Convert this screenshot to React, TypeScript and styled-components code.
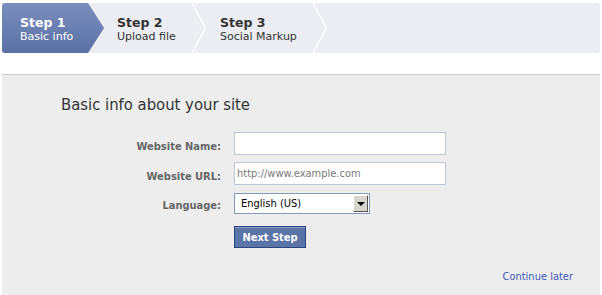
import styled, { createGlobalStyle } from 'styled-components';

const steps = [
  { title: 'Step 1', sub: 'Basic info', width: 102 },
  { title: 'Step 2', sub: 'Upload file', width: 103 },
  { title: 'Step 3', sub: 'Social Markup', width: 121 },
];

const GlobalStyle = createGlobalStyle`
  body {
    margin: 0;
    background: #fff;
    font-family: "DejaVu Sans Condensed", "DejaVu Sans", sans-serif;
    font-stretch: condensed;
  }
`;

const Chevron = () => (
  <ChevronSvg width="16" height="50" viewBox="0 0 16 50">
    <path d="M1 0 L14.5 25 L1 50" fill="none" stroke="#fff" strokeWidth="1.3" />
  </ChevronSvg>
);

const App = () => {
  return (
    <Page>
      <GlobalStyle />
      <StepBar>
        {steps.map((s, i) => (
          <Step key={s.title} $active={i === 0} $w={s.width}>
            <StepText $active={i === 0}>
              <StepTitle>{s.title}</StepTitle>
              <StepSub>{s.sub}</StepSub>
            </StepText>
            {i > 0 && <Chevron />}
          </Step>
        ))}
      </StepBar>

      <Panel>
        <Heading>Basic info about your site</Heading>
        <Form>
          <Label>Website Name:</Label>
          <TextInput type="text" />
          <Label>Website URL:</Label>
          <TextInput type="text" placeholder="http://www.example.com" />
          <Label>Language:</Label>
          <SelectBox>
            <SelectValue>English (US)</SelectValue>
            <ArrowButton>
              <Triangle />
            </ArrowButton>
          </SelectBox>
          <span />
          <div>
            <NextButton>Next Step</NextButton>
          </div>
        </Form>
        <Footer>
          <ContinueLink href="#">Continue later</ContinueLink>
        </Footer>
      </Panel>
    </Page>
  );
};

const Page = styled.div`
  padding: 3px 2px 0 2px;
`;

const StepBar = styled.div`
  display: flex;
  height: 50px;
  background-color: #ebedf2;
  border-radius: 3px;
`;

const Step = styled.div<{ $active: boolean; $w: number }>`
  display: flex;
  width: ${(p) => p.$w}px;
  height: 50px;
  padding-left: ${(p) => (p.$active ? 18 : 13)}px;
  box-sizing: border-box;
  ${(p) =>
    p.$active &&
    `
    background: linear-gradient(#7a8ebd, #5a71a6);
    border-radius: 3px 0 0 3px;
    clip-path: polygon(0 0, 86px 0, 102px 50%, 86px 100%, 0 100%);
  `}
`;

const ChevronSvg = styled.svg`
  flex-shrink: 0;
  display: block;
`;

const StepText = styled.div<{ $active: boolean }>`
  flex: 1;
  padding-top: 13px;
  font-family: "DejaVu Sans", sans-serif;
  font-stretch: normal;
  color: ${(p) => (p.$active ? '#fff' : '#333')};
`;

const StepTitle = styled.div`
  font-size: 12.5px;
  font-weight: 700;
  line-height: 14px;
`;

const StepSub = styled.div`
  font-size: 11px;
  line-height: 14px;
`;

const Panel = styled.div`
  margin-top: 21px;
  border-top: 1px solid #cccccc;
  background-color: #ededed;
  padding: 20px 27px 12px 59px;
`;

const Heading = styled.h2`
  margin: 0 0 18px 0;
  font-size: 16.5px;
  font-weight: 400;
  color: #333;
`;

const Form = styled.div`
  display: grid;
  grid-template-columns: 160px 212px;
  column-gap: 13px;
  row-gap: 7px;
  align-items: center;
`;

const Label = styled.label`
  text-align: right;
  font-size: 11px;
  font-weight: 700;
  color: #666;
  padding-top: 5px;
`;

const TextInput = styled.input`
  width: 212px;
  height: 23px;
  box-sizing: border-box;
  border: 1px solid #bdc7d8;
  background: #fff;
  padding: 0 2px;
  font-family: inherit;
  font-stretch: condensed;
  font-size: 11px;
  color: #333;
  outline: none;
  &::placeholder {
    color: #777;
  }
`;

const SelectBox = styled.div`
  display: flex;
  align-items: center;
  width: 136px;
  height: 21px;
  box-sizing: border-box;
  border: 1px solid #7f9db9;
  background: #fff;
  padding: 1px;
  margin-top: 1px;
`;

const SelectValue = styled.span`
  flex: 1;
  padding-left: 5px;
  font-size: 11px;
  color: #000;
`;

const ArrowButton = styled.span`
  display: flex;
  align-items: center;
  justify-content: center;
  width: 15px;
  height: 17px;
  box-sizing: border-box;
  background: #d8d5cc;
  border-top: 1px solid #fff;
  border-left: 1px solid #fff;
  border-right: 1px solid #555;
  border-bottom: 1px solid #555;
`;

const Triangle = styled.span`
  width: 0;
  height: 0;
  border-left: 4px solid transparent;
  border-right: 4px solid transparent;
  border-top: 4px solid #000;
`;

const NextButton = styled.button`
  margin-top: 5px;
  width: 72px;
  height: 22px;
  box-sizing: border-box;
  background: #5b74a8;
  border: 1px solid #29447e;
  box-shadow: inset 0 1px 0 #8a9cc2;
  color: #fff;
  font-family: inherit;
  font-stretch: condensed;
  font-size: 11px;
  font-weight: 700;
  padding: 0;
  cursor: pointer;
`;

const Footer = styled.div`
  display: flex;
  justify-content: flex-end;
  margin-top: 22px;
`;

const ContinueLink = styled.a`
  font-size: 11px;
  color: #3b59b9;
  text-decoration: none;
`;

export default App;
